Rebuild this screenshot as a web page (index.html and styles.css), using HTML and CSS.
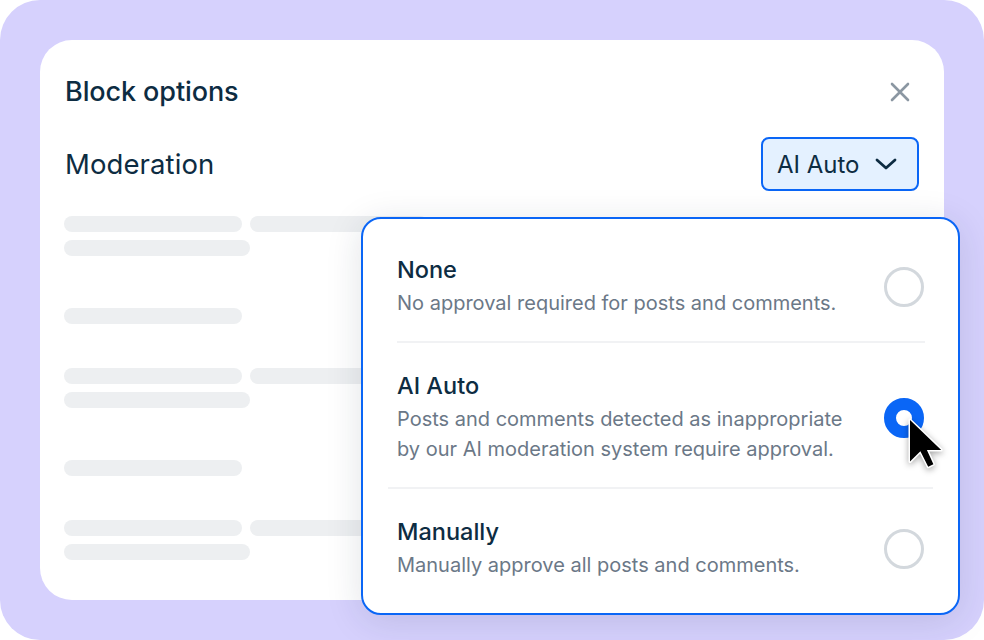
FILE: index.html
```html
<!DOCTYPE html>
<html lang="en">
<head>
    <meta charset="UTF-8">
    <meta name="viewport" content="width=device-width, initial-scale=1.0">
    <title>Block options</title>
    <link rel="stylesheet" href="styles.css">
</head>
<body>
    <div class="frame">
        <div class="card">
            <div class="card-header">
                <h2>Block options</h2>
                <button class="close" type="button" aria-label="Close">
                    <svg width="20" height="20" viewBox="0 0 20 20"><path d="M2 2 L18 18 M18 2 L2 18" stroke="#8b97a2" stroke-width="2.6" stroke-linecap="round"/></svg>
                </button>
            </div>

            <div class="setting-row">
                <span class="setting-label">Moderation</span>
                <button class="select" type="button">
                    AI Auto
                    <svg width="22" height="12" viewBox="0 0 22 12"><path d="M2 2 L11 10 L20 2" fill="none" stroke="#0d2c42" stroke-width="2.8" stroke-linecap="round" stroke-linejoin="round"/></svg>
                </button>
            </div>

            <!-- placeholder content behind the menu -->
            <div class="skeleton">
                <div class="sk-group">
                    <div class="sk-line"><span class="bar"></span><span class="bar"></span></div>
                    <div class="sk-line"><span class="bar wide"></span></div>
                </div>
                <div class="sk-group gap-lg">
                    <div class="sk-line"><span class="bar"></span></div>
                </div>
                <div class="sk-group">
                    <div class="sk-line"><span class="bar"></span><span class="bar"></span></div>
                    <div class="sk-line"><span class="bar wide"></span></div>
                </div>
                <div class="sk-group gap-lg">
                    <div class="sk-line"><span class="bar"></span></div>
                </div>
                <div class="sk-group">
                    <div class="sk-line"><span class="bar"></span><span class="bar"></span></div>
                    <div class="sk-line"><span class="bar wide"></span></div>
                </div>
            </div>

            <div class="menu">
                <div class="option">
                    <div class="option-text">
                        <div class="option-title">None</div>
                        <div class="option-desc">No approval required for posts and comments.</div>
                    </div>
                    <span class="radio"></span>
                </div>
                <hr class="divider">
                <div class="option">
                    <div class="option-text">
                        <div class="option-title">AI Auto</div>
                        <div class="option-desc">Posts and comments detected as inappropriate by our AI moderation system require approval.</div>
                    </div>
                    <span class="radio checked"></span>
                </div>
                <hr class="divider wide">
                <div class="option">
                    <div class="option-text">
                        <div class="option-title">Manually</div>
                        <div class="option-desc">Manually approve all posts and comments.</div>
                    </div>
                    <span class="radio"></span>
                </div>
            </div>

            <svg class="cursor" width="40" height="56" viewBox="0 0 40 56">
                <path d="M3 3 V44.6 L13.4 34.2 L21.2 49.8 L26.4 47.2 L19.9 32.9 H34.2 Z" fill="#000" stroke="#fff" stroke-width="3" stroke-linejoin="round" paint-order="stroke"/>
            </svg>
        </div>
    </div>
</body>
</html>
```

FILE: styles.css
```css
body {
    margin: 0;
    background: #ffffff;
    font-family: Inter, "Noto Sans", sans-serif;
    color: #0d2c42;
}
.frame {
    width: 984px;
    height: 640px;
    box-sizing: border-box;
    padding: 40px;
    background: #d6d1fd;
    border-radius: 40px;
}
.card {
    position: relative;
    height: 100%;
    box-sizing: border-box;
    padding: 36px 25px;
    background: #ffffff;
    border-radius: 32px;
}
.card-header {
    display: flex;
    justify-content: space-between;
    align-items: center;
    height: 32px;
}
.card-header h2 {
    margin: 0;
    font-size: 27px;
    font-weight: 500;
    line-height: 32px;
    letter-spacing: -0.1px;
}
.close {
    display: flex;
    padding: 0;
    margin-right: 9px;
    border: none;
    background: none;
}
.setting-row {
    display: flex;
    justify-content: space-between;
    align-items: center;
    margin-top: 29px;
}
.setting-label {
    font-size: 27.5px;
    line-height: 32px;
    letter-spacing: 0.1px;
}
.select {
    display: flex;
    align-items: center;
    justify-content: space-between;
    width: 158px;
    height: 54px;
    box-sizing: border-box;
    padding: 0 20px 0 14px;
    border: 2px solid #0a66f6;
    border-radius: 8px;
    background: #e4f1ff;
    font-family: inherit;
    font-size: 24px;
    color: #0d2c42;
}
.skeleton {
    margin: 25px 0 0 -1px;
}
.sk-group {
    display: flex;
    flex-direction: column;
    gap: 8px;
    margin-top: 44px;
}
.sk-group:first-child {
    margin-top: 0;
}
.sk-group.gap-lg {
    margin-top: 52px;
}
.sk-line {
    display: flex;
    gap: 8px;
}
.bar {
    width: 178px;
    height: 16px;
    border-radius: 8px;
    background: #edeff1;
}
.bar.wide {
    width: 186px;
}
.menu {
    position: absolute;
    left: 321px;
    top: 177px;
    width: 599px;
    box-sizing: border-box;
    padding: 8px 0 10px;
    background: #ffffff;
    border: 2px solid #0a66f6;
    border-radius: 20px;
    box-shadow: 0 6px 36px rgba(20, 35, 60, 0.13);
}
.option {
    display: flex;
    justify-content: space-between;
    align-items: center;
    padding: 29px 34px 23px 34px;
}
.option-text {
    max-width: 460px;
}
.option-title {
    font-size: 23.5px;
    font-weight: 500;
    line-height: 28px;
}
.option-desc {
    margin-top: 4px;
    font-size: 20px;
    line-height: 30px;
    color: #6b7887;
}
.divider {
    height: 2px;
    margin: 0 33px 0 34px;
    border: none;
    background: #f1f2f4;
}
.divider.wide {
    margin: 0 25px;
}
.radio {
    width: 40px;
    height: 40px;
    box-sizing: border-box;
    border: 3px solid #d3d8dd;
    border-radius: 50%;
}
.radio.checked {
    border: 12px solid #0a66f6;
}
.cursor {
    position: absolute;
    left: 867px;
    top: 377px;
    filter: drop-shadow(0 2px 3px rgba(0, 0, 0, 0.35));
}
```
